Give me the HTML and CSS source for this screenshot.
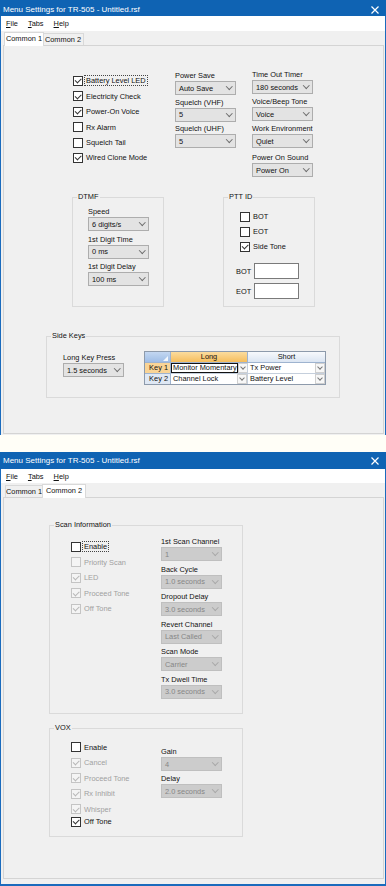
FILE: index.html
```html
<!DOCTYPE html>
<html lang="en">
<head>
    <meta charset="UTF-8">
    <meta name="viewport" content="width=device-width, initial-scale=1.0">
    <title>Menu Settings for TR-505</title>
    <link rel="stylesheet" href="styles.css">
</head>
<body>
    <!-- first window: Common 1 tab -->
    <div class="window window-first">
        <div class="titlebar">
            <span class="title">Menu Settings for TR-505 - Untitled.rsf</span>
            <svg class="close" width="8" height="8" viewBox="0 0 8 8"><path d="M0.5 0.5 L7.5 7.5 M7.5 0.5 L0.5 7.5" stroke="#fff" stroke-width="1.2"/></svg>
        </div>
        <div class="menubar">
            <span><u>F</u>ile</span>
            <span><u>T</u>abs</span>
            <span><u>H</u>elp</span>
        </div>
        <div class="tabstrip">
            <span class="tab tab-one active">Common 1</span>
            <span class="tab tab-two">Common 2</span>
        </div>
        <div class="page">
            <div class="top-section">
                <div class="check-list">
                    <div class="check on"><span class="box"></span><span class="focus">Battery Level LED</span></div>
                    <div class="check on"><span class="box"></span><span>Electricity Check</span></div>
                    <div class="check on"><span class="box"></span><span>Power-On Voice</span></div>
                    <div class="check"><span class="box"></span><span>Rx Alarm</span></div>
                    <div class="check"><span class="box"></span><span>Squelch Tail</span></div>
                    <div class="check on"><span class="box"></span><span>Wired Clone Mode</span></div>
                </div>
                <div class="field-col col-power">
                    <div class="field tight"><div class="field-label">Power Save</div><div class="select">Auto Save</div></div>
                    <div class="field tight"><div class="field-label">Squelch (VHF)</div><div class="select">5</div></div>
                    <div class="field tight"><div class="field-label">Squelch (UHF)</div><div class="select">5</div></div>
                </div>
                <div class="field-col col-timer">
                    <div class="field"><div class="field-label">Time Out Timer</div><div class="select">180 seconds</div></div>
                    <div class="field"><div class="field-label">Voice/Beep Tone</div><div class="select">Voice</div></div>
                    <div class="field"><div class="field-label">Work Environment</div><div class="select">Quiet</div></div>
                    <div class="field spaced"><div class="field-label">Power On Sound</div><div class="select">Power On</div></div>
                </div>
            </div>

            <div class="middle-section">
                <fieldset class="group group-dtmf">
                    <legend>DTMF</legend>
                    <div class="dtmf-body">
                        <div class="field loose"><div class="field-label">Speed</div><div class="select">6 digits/s</div></div>
                        <div class="field loose"><div class="field-label">1st Digit Time</div><div class="select">0 ms</div></div>
                        <div class="field loose"><div class="field-label">1st Digit Delay</div><div class="select">100 ms</div></div>
                    </div>
                </fieldset>
                <fieldset class="group group-ptt">
                    <legend>PTT ID</legend>
                    <div class="ptt-checks">
                        <div class="check"><span class="box"></span><span>BOT</span></div>
                        <div class="check"><span class="box"></span><span>EOT</span></div>
                        <div class="check on"><span class="box"></span><span>Side Tone</span></div>
                    </div>
                    <div class="ptt-codes">
                        <div class="code-row"><span class="code-label">BOT</span><span class="textbox"></span></div>
                        <div class="code-row"><span class="code-label">EOT</span><span class="textbox"></span></div>
                    </div>
                </fieldset>
            </div>

            <fieldset class="group group-sidekeys">
                <legend>Side Keys</legend>
                <div class="sidekeys-body">
                    <div class="field"><div class="field-label">Long Key Press</div><div class="select">1.5 seconds</div></div>
                    <div class="keygrid">
                        <div class="cell corner"></div>
                        <div class="cell head head-long">Long</div>
                        <div class="cell head head-short">Short</div>

                        <div class="cell rowhead current">Key 1</div>
                        <div class="cell combo"><span class="combo-text editing">Monitor Momentary</span><span class="combo-btn"></span></div>
                        <div class="cell combo"><span class="combo-text">Tx Power</span><span class="combo-btn"></span></div>

                        <div class="cell rowhead">Key 2</div>
                        <div class="cell combo"><span class="combo-text">Channel Lock</span><span class="combo-btn"></span></div>
                        <div class="cell combo"><span class="combo-text">Battery Level</span><span class="combo-btn"></span></div>
                    </div>
                </div>
            </fieldset>
        </div>
    </div>

    <!-- second window: Common 2 tab -->
    <div class="window window-second">
        <div class="titlebar">
            <span class="title">Menu Settings for TR-505 - Untitled.rsf</span>
            <svg class="close" width="8" height="8" viewBox="0 0 8 8"><path d="M0.5 0.5 L7.5 7.5 M7.5 0.5 L0.5 7.5" stroke="#fff" stroke-width="1.2"/></svg>
        </div>
        <div class="menubar">
            <span><u>F</u>ile</span>
            <span><u>T</u>abs</span>
            <span><u>H</u>elp</span>
        </div>
        <div class="tabstrip">
            <span class="tab tab-one">Common 1</span>
            <span class="tab tab-two active">Common 2</span>
        </div>
        <div class="page">
            <fieldset class="group group-scan">
                <legend>Scan Information</legend>
                <div class="split-body">
                    <div class="check-list scan-checks">
                        <div class="check"><span class="box"></span><span class="focus">Enable</span></div>
                        <div class="check disabled"><span class="box"></span><span>Priority Scan</span></div>
                        <div class="check on disabled"><span class="box"></span><span>LED</span></div>
                        <div class="check on disabled"><span class="box"></span><span>Proceed Tone</span></div>
                        <div class="check on disabled"><span class="box"></span><span>Off Tone</span></div>
                    </div>
                    <div class="field-col scan-fields">
                        <div class="field loose"><div class="field-label">1st Scan Channel</div><div class="select disabled">1</div></div>
                        <div class="field loose"><div class="field-label">Back Cycle</div><div class="select disabled">1.0 seconds</div></div>
                        <div class="field loose"><div class="field-label">Dropout Delay</div><div class="select disabled">3.0 seconds</div></div>
                        <div class="field loose"><div class="field-label">Revert Channel</div><div class="select disabled">Last Called</div></div>
                        <div class="field loose"><div class="field-label">Scan Mode</div><div class="select disabled">Carrier</div></div>
                        <div class="field loose"><div class="field-label">Tx Dwell Time</div><div class="select disabled">3.0 seconds</div></div>
                    </div>
                </div>
            </fieldset>

            <fieldset class="group group-vox">
                <legend>VOX</legend>
                <div class="split-body">
                    <div class="check-list vox-checks">
                        <div class="check"><span class="box"></span><span>Enable</span></div>
                        <div class="check on disabled"><span class="box"></span><span>Cancel</span></div>
                        <div class="check on disabled"><span class="box"></span><span>Proceed Tone</span></div>
                        <div class="check on disabled"><span class="box"></span><span>Rx Inhibit</span></div>
                        <div class="check on disabled"><span class="box"></span><span>Whisper</span></div>
                        <div class="check on last"><span class="box"></span><span>Off Tone</span></div>
                    </div>
                    <div class="field-col vox-fields">
                        <div class="field"><div class="field-label">Gain</div><div class="select disabled">4</div></div>
                        <div class="field"><div class="field-label">Delay</div><div class="select disabled">2.0 seconds</div></div>
                    </div>
                </div>
            </fieldset>
        </div>
    </div>
</body>
</html>
```

FILE: styles.css
```css
* {
    box-sizing: border-box;
}

body {
    margin: 0;
    width: 386px;
    background-color: #fffef7;
    font-family: 'Liberation Sans', Arial, sans-serif;
    font-size: 7.4px;
    color: #111;
}

/* window frame */
.window {
    display: flex;
    flex-direction: column;
    background-color: #f0f0f0;
    border-left: 1px solid #1a6bbd;
    border-right: 1px solid #1a6bbd;
}

.window-first {
    height: 435px;
    padding-bottom: 1px;
}

.window-second {
    height: 434px;
    margin-top: 17px;
    padding-bottom: 5px;
    border-bottom: 2px solid #1a6bbd;
}

.titlebar {
    height: 17px;
    flex: none;
    margin: 0 -1px;
    padding: 0 7px 0 3px;
    display: flex;
    align-items: center;
    justify-content: space-between;
    background-color: #0f63b3;
    color: #fff;
    font-size: 8px;
}

.window-first .titlebar {
    height: 16px;
    padding-top: 3px;
}

.menubar {
    height: 14px;
    flex: none;
    display: flex;
    align-items: center;
    gap: 10px;
    padding-left: 5px;
    background-color: #fff;
    font-size: 7.4px;
}

.window-first .menubar {
    height: 15px;
}

.tabstrip {
    height: 14px;
    flex: none;
    display: flex;
    align-items: flex-end;
    padding-left: 4px;
    position: relative;
    z-index: 1;
}

.tab {
    height: 12px;
    line-height: 11px;
    text-align: center;
    white-space: nowrap;
    border: 1px solid #d9d9d9;
    border-bottom: none;
    background-color: #f0f0f0;
}

.tab-one { width: 38px; }
.tab-two { width: 42px; margin-left: -1px; }

.tab.active {
    height: 14px;
    line-height: 12px;
    margin-bottom: -1px;
    margin-left: -1px;
    margin-right: -1px;
    background-color: #fff;
    position: relative;
    z-index: 2;
}

.tab-one.active { width: 40px; }
.tab-two.active { width: 44px; }

.page {
    flex: 1;
    margin: 0 1px 0 2px;
    border: 1px solid #d4d4d4;
    background-color: #f0f0f0;
}

/* checkboxes */
.check-list {
    display: flex;
    flex-direction: column;
}

.check {
    height: 15.4px;
    display: flex;
    align-items: center;
    white-space: nowrap;
}

.box {
    width: 10px;
    height: 10px;
    margin-right: 3px;
    border: 1px solid #333;
    background-color: #fff;
    display: flex;
    align-items: center;
    justify-content: center;
    flex: none;
}

.check.on .box::after {
    content: '';
    width: 5px;
    height: 2.5px;
    margin-top: -2px;
    border-left: 1px solid #333;
    border-bottom: 1px solid #333;
    transform: rotate(-45deg);
}

.check.disabled {
    color: #a0a0a0;
}

.check.disabled .box {
    border-color: #c4c4c4;
    background-color: #f4f4f4;
}

.check.disabled.on .box::after {
    border-color: #b8b8b8;
}

.focus {
    outline: 1px dotted #444;
    padding: 0 1px;
    margin-left: -1px;
    line-height: 9px;
}

/* labelled drop-down fields */
.field {
    margin-bottom: 2px;
}

.field.tight { margin-bottom: 1.5px; }
.field.loose { margin-bottom: 2.5px; }
.field.spaced { margin-top: 4px; }

.field-label {
    height: 11px;
    line-height: 11px;
    white-space: nowrap;
}

.select {
    width: 61px;
    height: 14px;
    padding: 0 4px 0 3px;
    display: flex;
    align-items: center;
    justify-content: space-between;
    border: 1px solid #adadad;
    background-color: #e3e3e3;
    white-space: nowrap;
}

.select::after {
    content: '';
    width: 3.5px;
    height: 3.5px;
    margin-top: -3px;
    border-right: 1px solid #6d6d6d;
    border-bottom: 1px solid #6d6d6d;
    transform: rotate(45deg);
    flex: none;
}

.select.disabled {
    color: #868686;
    background-color: #cccccc;
    border-color: #bfbfbf;
}

.select.disabled::after {
    border-color: #a8a8a8;
}

/* group boxes */
.group {
    margin: 0;
    padding: 0;
    min-width: 0;
    border: 1px solid #dadada;
}

.group legend {
    height: 10px;
    line-height: 10px;
    margin-left: 4px;
    padding: 0 1px;
}

/* page one */
.top-section {
    height: 146px;
    display: flex;
    align-items: flex-start;
    padding: 23px 0 0 69px;
}

.top-section .check-list {
    width: 102px;
    margin-top: 4.3px;
}

.col-power {
    width: 77px;
    margin-top: 1px;
}

.middle-section {
    display: flex;
    gap: 59px;
    padding-left: 68px;
}

.group-dtmf {
    width: 92px;
    height: 115px;
}

.dtmf-body {
    padding: 4px 0 0 15px;
}

.group-ptt {
    width: 92px;
    height: 115px;
}

.ptt-checks {
    padding: 7px 0 0 16px;
}

.ptt-checks .check {
    height: 15px;
}

.ptt-codes {
    padding: 9px 0 0 12px;
    display: flex;
    flex-direction: column;
    gap: 4px;
}

.code-row {
    display: flex;
    align-items: center;
}

.code-label {
    width: 18px;
}

.textbox {
    width: 45px;
    height: 16px;
    border: 1px solid #7a7a7a;
    background-color: #fff;
}

.group-sidekeys {
    width: 294px;
    height: 67px;
    margin: 24px 0 0 42px;
}

.sidekeys-body {
    display: flex;
    align-items: flex-start;
    padding: 11px 0 0 16px;
}

/* side key grid */
.keygrid {
    display: grid;
    grid-template-columns: 26px 77px 77px;
    grid-template-rows: 11px 10.5px 10.5px;
    margin: -1px 0 0 20px;
    border: 1px solid #8d9aab;
    background-color: #fff;
}

.cell {
    line-height: 9.5px;
    border-right: 1px solid #c5cfdc;
    border-bottom: 1px solid #c5cfdc;
    white-space: nowrap;
    overflow: hidden;
}

.cell:nth-child(3n) {
    border-right: none;
}

.cell:nth-child(n+7) {
    border-bottom: none;
}

.corner {
    position: relative;
    background: linear-gradient(#c3d7f1, #9fbde6);
    border-color: #9eb3cf;
}

.corner::after {
    content: '';
    position: absolute;
    right: 2px;
    bottom: 1px;
    border-left: 5px solid transparent;
    border-bottom: 5px solid #f4f8fd;
}

.head {
    text-align: center;
    border-color: #9eb3cf;
}

.head-long {
    background: linear-gradient(#fbdc9e, #f5bd5c);
}

.head-short {
    background: linear-gradient(#f7f9fc, #dbe5f2);
}

.rowhead {
    text-align: right;
    padding-right: 2px;
    background-color: #dfe8f4;
    border-color: #9eb3cf;
}

.rowhead.current {
    background-color: #f9d496;
}

.combo {
    display: flex;
}

.combo-text {
    flex: 1;
    padding-left: 2px;
}

.combo-text.editing {
    border: 1px solid #111;
    line-height: 7.5px;
    padding-left: 1px;
}

.combo-btn {
    width: 10px;
    flex: none;
    display: flex;
    align-items: center;
    justify-content: center;
    border: 1px solid #cfcfcf;
    background-color: #f7f7f7;
}

.combo-btn::after {
    content: '';
    width: 3px;
    height: 3px;
    margin-top: -2px;
    border-right: 1px solid #777;
    border-bottom: 1px solid #777;
    transform: rotate(45deg);
}

/* page two */
.group-scan {
    width: 194px;
    height: 194px;
    margin: 22px 0 0 45px;
}

.split-body {
    display: flex;
    align-items: flex-start;
}

.scan-checks,
.vox-checks {
    width: 111px;
    padding-left: 21px;
}

.scan-checks .check,
.vox-checks .check {
    height: 15.5px;
}

.scan-checks {
    margin-top: 9.2px;
}

.scan-fields {
    margin-top: 6px;
}

.group-vox {
    width: 194px;
    height: 114px;
    margin: 9px 0 0 45px;
}

.vox-checks {
    margin-top: 6.7px;
}

.vox-checks .check.last {
    margin-top: -3px;
}

.vox-fields {
    margin-top: 13px;
}
```
